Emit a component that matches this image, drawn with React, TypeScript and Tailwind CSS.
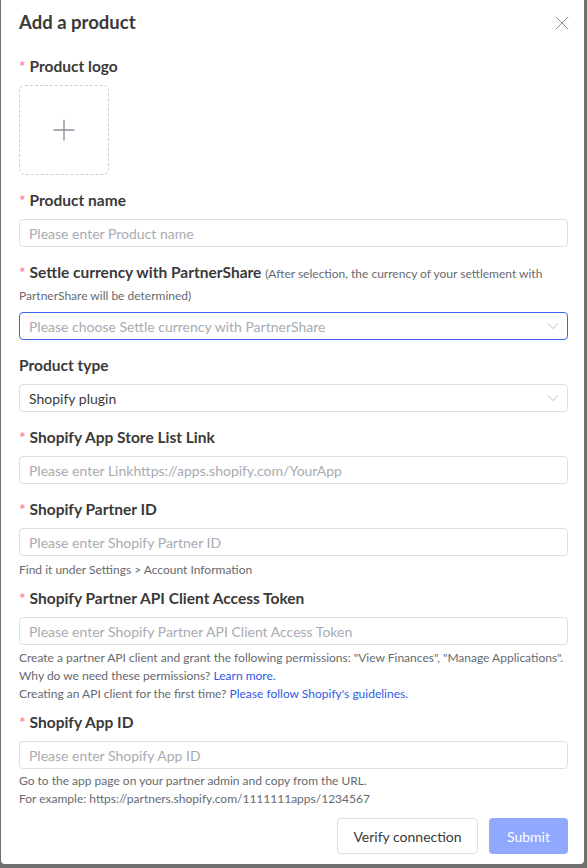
import { X, Plus, ChevronDown } from "lucide-react";

const font = { fontFamily: 'Lato, "Liberation Sans", Arial, sans-serif' };

function Label({ text, required = true }: { text: string; required?: boolean }) {
  return (
    <div className="h-[22px] leading-[22px] mb-[8px] text-[15.5px] font-bold text-[#3a3a3a]">
      {required && <span className="text-[#f56c6c] font-normal mr-[4px]">*</span>}
      {text}
    </div>
  );
}

function Input({ placeholder }: { placeholder: string }) {
  return (
    <div className="h-[28px] border border-[#dcdfe6] rounded-[4px] px-[9px] flex items-center text-[14px] text-[#a8abb2]">
      {placeholder}
    </div>
  );
}

function Select({
  value,
  placeholder,
  focused = false,
}: {
  value?: string;
  placeholder?: string;
  focused?: boolean;
}) {
  return (
    <div
      className={`h-[28px] border rounded-[4px] pl-[9px] pr-[4px] flex items-center justify-between text-[14px] ${
        focused ? "border-[#3d63f0]" : "border-[#dcdfe6]"
      }`}
    >
      <span className={value ? "text-[#3a3a3a]" : "text-[#a8abb2]"}>{value ?? placeholder}</span>
      <ChevronDown className="w-[20px] h-[20px] text-[#b0b3b8]" strokeWidth={1} />
    </div>
  );
}

function Help({ children }: { children: React.ReactNode }) {
  return <div className="text-[12px] leading-[18px] text-[#666a70] whitespace-nowrap">{children}</div>;
}

export default function App() {
  return (
    <div className="h-[868px] overflow-hidden bg-[#707070] pl-[1px]" style={font}>
      <div className="w-[583px] h-[864px] overflow-hidden bg-white rounded-b-[4px] flex flex-col">
        {/* Header */}
        <div className="h-[46px] shrink-0 pl-[18px] pr-[16px] flex items-center justify-between">
          <h2 className="text-[18.5px] font-bold text-[#3a3a3a]">Add a product</h2>
          <X className="w-[24px] h-[24px] text-[#909399] -mr-[6px]" strokeWidth={1} />
        </div>

        {/* Body */}
        <div className="pl-[18px] pr-[16px] pt-[9px]">
          <Label text="Product logo" />
          <div className="w-[90px] h-[90px] border border-dashed border-[#cdd0d6] rounded-[6px] flex items-center justify-center">
            <Plus className="w-[34px] h-[34px] text-[#8c939d]" strokeWidth={1} />
          </div>

          <div className="mt-[14px]">
            <Label text="Product name" />
            <Input placeholder="Please enter Product name" />
          </div>

          <div className="mt-[14px]">
            <div className="leading-[22px] mb-[7px] text-[15.5px] font-bold text-[#3a3a3a]">
              <span className="text-[#f56c6c] font-normal mr-[4px]">*</span>
              Settle currency with PartnerShare{" "}
              <span className="text-[12px] leading-[12px] font-normal text-[#666a70]">
                (After selection, the currency of your settlement with PartnerShare will be determined)
              </span>
            </div>
            <Select placeholder="Please choose Settle currency with PartnerShare" focused />
          </div>

          <div className="mt-[14px]">
            <Label text="Product type" required={false} />
            <Select value="Shopify plugin" />
          </div>

          <div className="mt-[14px]">
            <Label text="Shopify App Store List Link" />
            <Input placeholder="Please enter Linkhttps://apps.shopify.com/YourApp" />
          </div>

          <div className="mt-[14px]">
            <Label text="Shopify Partner ID" />
            <Input placeholder="Please enter Shopify Partner ID" />
            <div className="mt-[5px]">
              <Help>Find it under Settings &gt; Account Information</Help>
            </div>
          </div>

          <div className="mt-[8px]">
            <Label text="Shopify Partner API Client Access Token" />
            <Input placeholder="Please enter Shopify Partner API Client Access Token" />
            <div className="mt-[4px]">
              <Help>
                Create a partner API client and grant the following permissions: "View Finances", "Manage
                Applications".
              </Help>
              <Help>
                Why do we need these permissions? <span className="text-[#2f5bea]">Learn more.</span>
              </Help>
              <Help>
                Creating an API client for the first time?{" "}
                <span className="text-[#2f5bea]">Please follow Shopify's guidelines.</span>
              </Help>
            </div>
          </div>

          <div className="mt-[8px]">
            <Label text="Shopify App ID" />
            <Input placeholder="Please enter Shopify App ID" />
            <div className="mt-[3px]">
              <Help>Go to the app page on your partner admin and copy from the URL.</Help>
              <Help>For example: https://partners.shopify.com/1111111apps/1234567</Help>
            </div>
          </div>

          {/* Footer */}
          <div className="mt-[10px] flex justify-end gap-[11px]">
            <button className="h-[36px] w-[141px] border border-[#dcdfe6] rounded-[4px] bg-white text-[14px] text-[#3a3a3a]">
              Verify connection
            </button>
            <button className="h-[36px] w-[79px] rounded-[4px] bg-[#91a8ff] text-[14px] text-white">
              Submit
            </button>
          </div>
        </div>
      </div>
    </div>
  );
}
